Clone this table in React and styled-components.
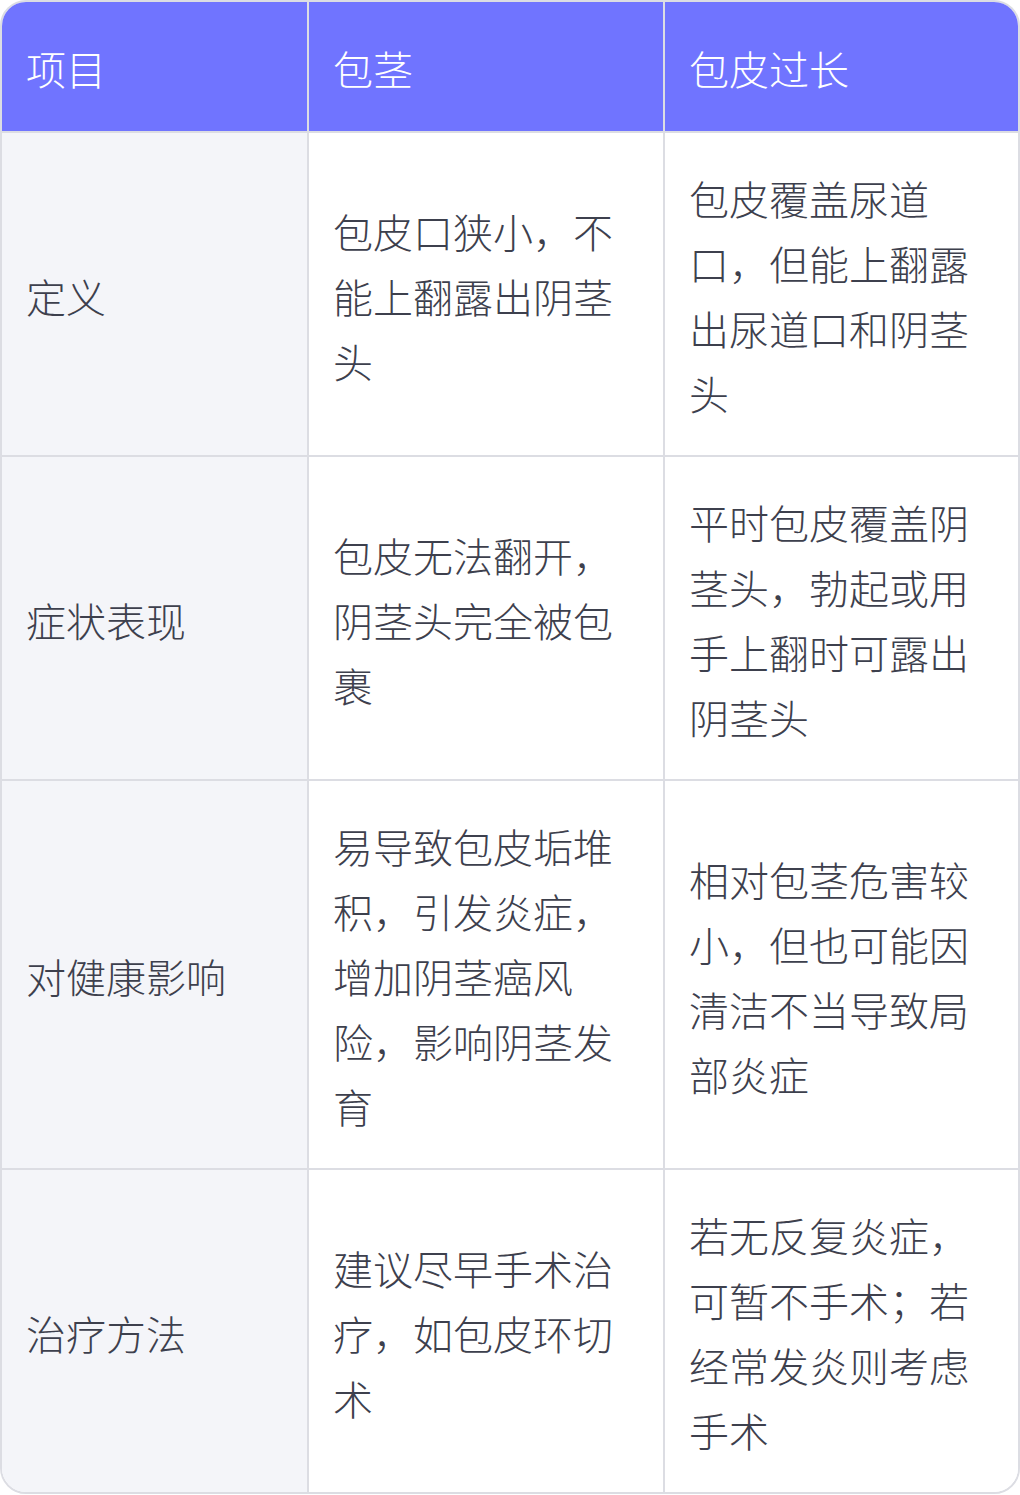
import React from "react";
import styled, { createGlobalStyle } from "styled-components";

const GlobalStyle = createGlobalStyle`
    body {
        margin: 0;
        background: #ffffff;
        font-family: "Noto Sans CJK SC", "Noto Sans", sans-serif;
    }
`;

const TableWrapper = styled.div`
    width: 1020px;
    box-sizing: border-box;
    border: 2px solid #dcdde3;
    border-radius: 26px;
    overflow: hidden;
    display: grid;
    grid-template-columns: 307px 356px 353px;
`;

const Cell = styled.div`
    box-sizing: border-box;
    display: flex;
    align-items: center;
    padding: ${(p) => (p.$head ? "34px 24px 30px" : "33px 24px 29px")};
    font-size: 40px;
    line-height: 65px;
    font-weight: 300;
    color: ${(p) => (p.$head ? "#ffffff" : "#3d404d")};
    background: ${(p) => (p.$head ? "#7074ff" : p.$first ? "#f4f5f9" : "#ffffff")};
    border-right: ${(p) => (p.$last ? "none" : "2px solid #dcdde3")};
    border-bottom: ${(p) => (p.$bottom ? "none" : "2px solid #dcdde3")};
    word-break: break-all;
`;

const headers = ["项目", "包茎", "包皮过长"];

const rows = [
    ["定义", "包皮口狭小，不能上翻露出阴茎头", "包皮覆盖尿道口，但能上翻露出尿道口和阴茎头"],
    ["症状表现", "包皮无法翻开，阴茎头完全被包裹", "平时包皮覆盖阴茎头，勃起或用手上翻时可露出阴茎头"],
    ["对健康影响", "易导致包皮垢堆积，引发炎症，增加阴茎癌风险，影响阴茎发育", "相对包茎危害较小，但也可能因清洁不当导致局部炎症"],
    ["治疗方法", "建议尽早手术治疗，如包皮环切术", "若无反复炎症，可暂不手术；若经常发炎则考虑手术"],
];

const App = () => {
    return (
        <>
            <GlobalStyle />
            <TableWrapper>
                {headers.map((h, i) => (
                    <Cell key={h} $head $last={i === 2}>
                        {h}
                    </Cell>
                ))}
                {rows.map((row, r) =>
                    row.map((text, c) => (
                        <Cell
                            key={`${r}-${c}`}
                            $first={c === 0}
                            $last={c === 2}
                            $bottom={r === rows.length - 1}
                        >
                            {text}
                        </Cell>
                    ))
                )}
            </TableWrapper>
        </>
    );
};

export default App;
